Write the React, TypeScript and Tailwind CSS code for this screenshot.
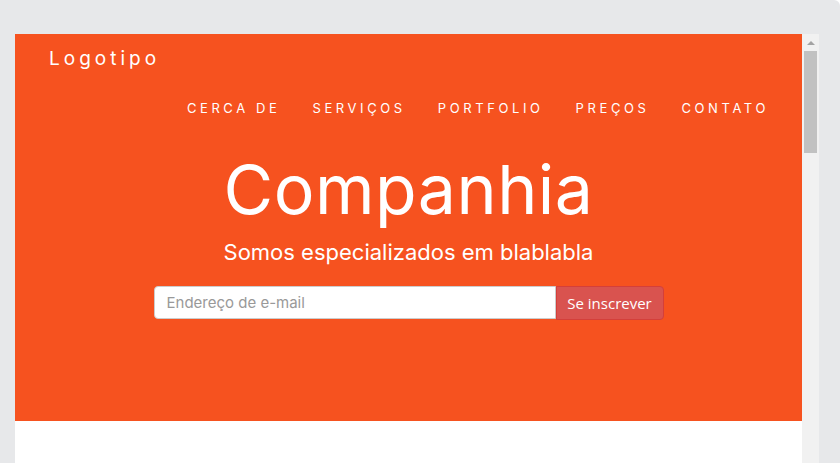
import React from "react";

const navItems = ["CERCA DE", "SERVIÇOS", "PORTFOLIO", "PREÇOS", "CONTATO"];

const App: React.FC = () => {
  return (
    <div className="w-[840px] h-[463px] bg-[#e7e8ea] pt-[34px] pl-[15px] overflow-hidden rounded-tr-md font-['Inter',sans-serif]">
      <div className="flex h-[429px]">
        {/* Page */}
        <div className="w-[787px] bg-white flex flex-col">
          <section className="h-[387px] bg-[#f6521f] text-white flex flex-col">
            {/* Logo */}
            <div className="pl-[34px] pt-[13px] h-[40px] text-[19px] tracking-[4px] leading-[24px]">
              Logotipo
            </div>

            {/* Navigation */}
            <nav className="flex justify-end gap-[32px] pr-[33px] pt-[26px] text-[13px] tracking-[3.6px] leading-[16px]">
              {navItems.map((item) => (
                <a key={item} href="#" className="text-white">
                  {item}
                </a>
              ))}
            </nav>

            {/* Hero */}
            <div className="flex flex-col items-center">
              <h1 className="mt-[37px] text-[68px] leading-[72px] tracking-[0.5px] font-normal">Companhia</h1>
              <p className="mt-[13px] text-[22px] leading-[28px]">Somos especializados em blablabla</p>
              <div className="mt-[20px] flex">
                <input
                  type="text"
                  placeholder="Endereço de e-mail"
                  className="w-[402px] h-[33px] rounded-l-[4px] border border-[#ccc] bg-white px-[12px] text-[15px] text-gray-700 placeholder:text-[#999] outline-none"
                />
                <button className="w-[108px] h-[34px] rounded-r-[4px] border border-[#d43f3a] bg-[#d9534f] text-[15px] text-white font-['Open_Sans',sans-serif]">
                  Se inscrever
                </button>
              </div>
            </div>
          </section>
        </div>

        {/* Scrollbar */}
        <div className="w-[17px] bg-[#f1f1f1] flex flex-col items-center">
          <div className="h-[17px] flex items-center justify-center">
            <div className="w-0 h-0 border-l-[4px] border-r-[4px] border-b-[4px] border-l-transparent border-r-transparent border-b-[#a3a3a3]" />
          </div>
          <div className="w-[13px] h-[102px] bg-[#c1c1c1]" />
        </div>
      </div>
    </div>
  );
};

export default App;
